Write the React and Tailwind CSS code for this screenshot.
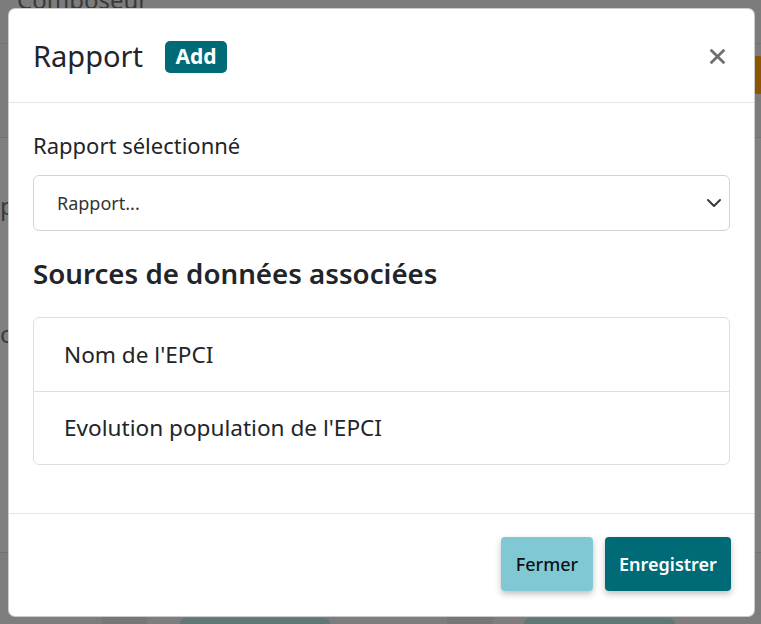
import React from 'react';

const sources = ["Nom de l'EPCI", "Evolution population de l'EPCI"];

const CloseIcon = () => (
    <svg width="17" height="17" viewBox="0 0 16 16" className="text-[#6f6f6f]">
        <path d="M2.5 2.5l11 11M13.5 2.5l-11 11" stroke="currentColor" strokeWidth="2.6" strokeLinecap="square" fill="none" />
    </svg>
);

const Chevron = () => (
    <svg width="16" height="16" viewBox="0 0 16 16">
        <path d="M2 5l6 6 6-6" stroke="#343a40" strokeWidth="2" strokeLinecap="round" strokeLinejoin="round" fill="none" />
    </svg>
);

const Background = () => (
    <div className="flex h-full flex-col bg-[#7f7f7f] text-[#3a3a3a]">
        <div className="relative h-[43px] bg-[#7c7c7c] pl-[17px] text-[24px] leading-[10px]">
            <span className="relative top-[-5px]">Composeur</span>
        </div>
        <div className="relative h-[94px] border-t border-[#727272] bg-[#7c7c7c]">
            <div className="absolute right-[-12px] top-[12px] h-[38px] w-[30px] rounded-full bg-[#8a5700]" />
        </div>
        <div className="flex flex-1 flex-col border-t border-[#727272] bg-[#808080] text-[24px]">
            <div className="mt-[50px] leading-[36px]">p</div>
            <div className="mt-[92px] leading-[36px]">o</div>
        </div>
        <div className="flex h-[72px] items-end border-t border-[#727272] bg-[#7d7d7d]">
            <div className="ml-[102px] h-[20px] w-[45px] bg-[#777777]" />
            <div className="ml-[33px] h-[6px] w-[150px] rounded-t-[10px] bg-[#5f7777]" />
            <div className="ml-[117px] h-[20px] w-[46px] bg-[#777777]" />
            <div className="ml-[31px] h-[6px] w-[151px] rounded-t-[10px] bg-[#5f7777]" />
        </div>
    </div>
);

const App = () => {
    return (
        <div className="relative h-[624px] w-[761px] overflow-hidden font-['Noto_Sans',sans-serif] text-[#212529]">
            <Background />
            <div className="absolute inset-0 p-2">
                <div className="flex h-[609px] w-[747px] flex-col rounded-[7px] border border-black/20 bg-white">
                    {/* header */}
                    <div className="flex h-[94px] shrink-0 items-center border-b border-[#e6e6e6] pl-[24px] pr-[28px]">
                        <h5 className="text-[29px] font-normal leading-[45px]">Rapport</h5>
                        <span className="ml-[22px] mt-[2px] flex h-[32px] w-[62px] items-center justify-center rounded-[5px] bg-[#006b77] text-[21px] font-bold text-white">
                            Add
                        </span>
                        <button className="ml-auto mt-[2px]">
                            <CloseIcon />
                        </button>
                    </div>

                    {/* body */}
                    <div className="flex-1 px-[24px] pt-[24px]">
                        <label className="block text-[22px] leading-[36px]">Rapport sélectionné</label>
                        <div className="mt-[12px] flex h-[56px] items-center rounded-[6px] border border-[#ced4da] pl-[23px] pr-[7px]">
                            <span className="text-[18px] text-[#333]">Rapport...</span>
                            <span className="ml-auto flex">
                                <Chevron />
                            </span>
                        </div>
                        <h4 className="mt-[22px] text-[27.7px] font-semibold leading-[40px]">Sources de données associées</h4>
                        <ul className="mt-[24px] rounded-[6px] border border-[#dfdfdf]">
                            {sources.map((s, i) => (
                                <li
                                    key={s}
                                    className={`flex h-[73px] items-center pl-[30px] text-[22.6px] ${i > 0 ? 'border-t border-[#dfdfdf]' : ''}`}
                                >
                                    {s}
                                </li>
                            ))}
                        </ul>
                    </div>

                    {/* footer */}
                    <div className="flex h-[103px] shrink-0 items-center justify-end gap-[12px] border-t border-[#e6e6e6] pb-[2px] pr-[23px]">
                        <button className="h-[54px] w-[92px] rounded-[4px] bg-[#80c9d4] text-[18px] font-medium text-[#111] shadow-[0_3px_6px_rgba(0,0,0,0.25)]">
                            Fermer
                        </button>
                        <button className="h-[54px] w-[126px] rounded-[4px] bg-[#006b77] text-[18px] font-semibold text-white shadow-[0_3px_6px_rgba(0,0,0,0.25)]">
                            Enregistrer
                        </button>
                    </div>
                </div>
            </div>
        </div>
    );
};

export default App;
